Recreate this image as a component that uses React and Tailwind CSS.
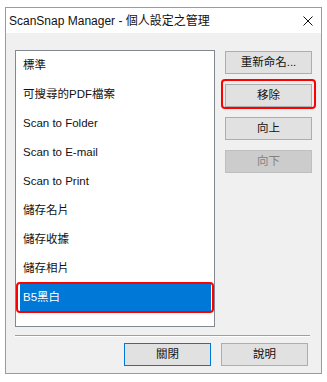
import React from 'react';

const font = { fontFamily: '"Liberation Sans", "Noto Sans CJK TC", sans-serif' };

const items = ['標準', '可搜尋的PDF檔案', 'Scan to Folder', 'Scan to E-mail', 'Scan to Print', '儲存名片', '儲存收據', '儲存相片', 'B5黑白'];

const Btn = ({ children, disabled, focused, className = '' }) => (
  <div
    className={`relative h-[23px] w-[87px] flex items-center justify-center text-[11.5px] border ${
      disabled
        ? 'bg-[#cccccc] border-[#bfbfbf] text-[#838383]'
        : focused
        ? 'bg-[#e1e1e1] border-[#0078d7] text-[#111]'
        : 'bg-[#e1e1e1] border-[#adadad] text-[#111]'
    } ${className}`}
  >
    {children}
  </div>
);

export default function App() {
  return (
    <div className="w-[327px] h-[382px] bg-white pt-[7px] pl-[5px]" style={font}>
      <div className="w-[317px] h-[367px] border border-[#9b9b9b] flex flex-col">
        {/* title bar */}
        <div className="h-[25px] bg-white flex items-center justify-between pl-[3px] pr-[8px] shrink-0">
          <span className="text-[12px] text-[#111] leading-none">ScanSnap Manager - 個人設定之管理</span>
          <svg width="10" height="10" viewBox="0 0 10 10">
            <path d="M0.5 0.5 L9.5 9.5 M9.5 0.5 L0.5 9.5" stroke="#111" strokeWidth="1" fill="none" />
          </svg>
        </div>

        {/* body */}
        <div className="flex-1 bg-[#f0f0f0] flex flex-col">
          <div className="flex pl-[9px] pt-[17px]">
            <div className="w-[200px] h-[277px] bg-white border border-[#828790]">
              {items.map((it, i) => {
                const sel = i === items.length - 1;
                return (
                  <div
                    key={it}
                    className={`relative h-[29px] ml-[4px] mr-[3px] pl-[3px] flex items-center text-[11.5px] ${
                      sel ? 'bg-[#0078d7] text-white' : 'text-[#111]'
                    }`}
                  >
                    {it}
                    {sel && (
                      <div className="absolute left-[-4px] top-[-1px] w-[198px] h-[31px] border-2 border-[#ff0000] rounded-[4px]" />
                    )}
                  </div>
                );
              })}
            </div>

            <div className="ml-[10px] pt-[1px] flex flex-col gap-[10px]">
              <Btn>重新命名...</Btn>
              <Btn>
                移除
                <div className="absolute left-[-5px] top-[-6px] w-[95px] h-[30px] border-2 border-[#ff0000] rounded-[4px]" />
              </Btn>
              <Btn>向上</Btn>
              <Btn disabled>向下</Btn>
            </div>
          </div>

          <div className="ml-[9px] mt-[8px] w-[295px] h-[1px] bg-[#a0a0a0]" />
          <div className="ml-[9px] w-[295px] h-[1px] bg-white" />

          <div className="flex justify-end gap-[10px] pr-[13px] mt-[6px]">
            <Btn focused>關閉</Btn>
            <Btn>說明</Btn>
          </div>
        </div>
      </div>
    </div>
  );
}
